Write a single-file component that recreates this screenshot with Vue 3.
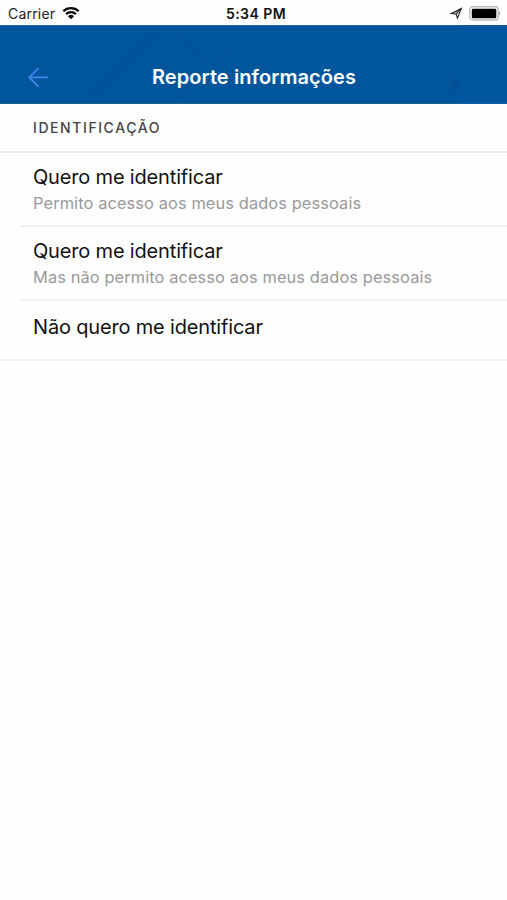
<script setup>
const options = [
  { title: 'Quero me identificar', note: 'Permito acesso aos meus dados pessoais' },
  { title: 'Quero me identificar', note: 'Mas não permito acesso aos meus dados pessoais' },
  { title: 'Não quero me identificar' },
]
</script>

<template>
  <main class="screen">
    <div class="status">
      <div class="carrier">
        <span class="carrier-name">Carrier</span>
        <svg class="wifi" width="18" height="14" viewBox="0 0 18 14" fill="none" stroke="#0c0c0c" stroke-width="2.3">
          <path d="M1.3 5.2a11 11 0 0 1 15.4 0M4.1 8.1a7 7 0 0 1 9.8 0" />
          <path d="M9 13.2 6 10.2a4.3 4.3 0 0 1 6 0z" fill="#0c0c0c" stroke="none" />
        </svg>
      </div>
      <span class="time">5:34 PM</span>
      <div class="indicators">
        <svg width="13" height="13" viewBox="0 0 13 13" fill="#777" stroke="#2c2c2c" stroke-width="1.2" stroke-linejoin="miter">
          <path d="M11.2 1.6 1.3 6.6 6 7l1.5 4z" fill="none" />
          <path d="M11.2 1.6 6 7" />
        </svg>
        <svg class="battery" width="33" height="15" viewBox="0 0 33 15">
          <rect x=".8" y=".8" width="28.4" height="13.2" rx="3" fill="#fff" stroke="#bcbcbc" stroke-width="1.4" />
          <rect x="2.8" y="2.7" width="24.5" height="9.6" rx="1.4" fill="#000" />
          <path d="M30.2 5q2.2 2.4 0 4.8z" fill="#999" />
        </svg>
      </div>
    </div>

    <header class="bar">
      <svg class="pattern" width="507" height="79" viewBox="0 0 507 79" fill="none">
        <path d="M92 71 156 7" stroke="#0b3f78" stroke-width="1" opacity=".7" />
        <path d="M178 72 237 20M174 8l60 50" stroke="#0b3f78" stroke-width="1" opacity=".25" />
        <path d="M450 54h9v11h-9z" fill="#064b8b" opacity=".4" />
        <path d="M461 0h46v79h-46z" fill="#005aa5" opacity=".4" />
      </svg>
      <svg class="back" width="20" height="20" viewBox="0 0 20 20" fill="none" stroke="#4285f0" stroke-width="1.8" stroke-linecap="round" stroke-linejoin="round">
        <path d="M19 10.4H1.2M10 1.6 1.2 10.4l8.8 8.8" />
      </svg>
      <h1>Reporte informações</h1>
    </header>

    <h2>IDENTIFICAÇÃO</h2>
    <ul>
      <li v-for="(option, i) in options" :key="i">
        <div class="title">{{ option.title }}</div>
        <div v-if="option.note" class="note">{{ option.note }}</div>
      </li>
    </ul>
  </main>
</template>

<style>
body { margin: 0; background: #fff; }
</style>

<style scoped>
.screen {
  box-sizing: border-box;
  width: 507px;
  height: 900px;
  overflow: hidden;
  background: #fefefe;
  font-family: Inter, "Liberation Sans", sans-serif;
}
.status {
  display: grid;
  grid-template-columns: 1fr auto 1fr;
  align-items: center;
  height: 25px;
  padding: 0 5px 0 8px;
}
.carrier { display: flex; align-items: center; gap: 7px; color: #222; font-size: 14px; padding-top: 2px; }
.carrier-name { letter-spacing: .2px; }
.wifi { margin-top: -1px; }
.time { font-size: 14px; font-weight: 600; color: #111; letter-spacing: .45px; padding: 2px 0 0 2px; }
.indicators { display: flex; justify-content: flex-end; align-items: center; gap: 6px; padding-top: 1px; }
.bar {
  position: relative;
  box-sizing: border-box;
  display: grid;
  grid-template-columns: 1fr auto 1fr;
  align-items: center;
  height: 79px;
  padding: 24px 0 0 28px;
  background: #00569d;
  border-top: 1px solid #1c6299;
  border-bottom: 1px solid #1c6299;
}
.pattern { position: absolute; left: 0; top: -1px; }
.back { position: relative; }
h1 { position: relative; margin: 0 27px 0 0; color: #fff; font-size: 20px; font-weight: 600; line-height: 26px; letter-spacing: .09px; }
h2 {
  box-sizing: border-box;
  height: 49px;
  margin: 0;
  padding: 14px 33px 0;
  border-bottom: 2px solid #ececec;
  color: #444;
  font-size: 14px;
  font-weight: 500;
  line-height: 19px;
  letter-spacing: 1.58px;
}
ul { list-style: none; margin: 0; padding: 0 0 0 21px; border-bottom: 2px solid #f3f3f3; }
li { box-sizing: border-box; height: 74px; padding: 10px 0 0 12px; border-bottom: 2px solid #efefef; }
li:last-child { height: 58px; padding-top: 12px; border-bottom: 0; }
.title { color: #111; font-size: 20px; line-height: 28px; white-space: nowrap; letter-spacing: -.17px; }
.note { color: #999; font-size: 16.4px; line-height: 24px; white-space: nowrap; letter-spacing: .1px; }
</style>
